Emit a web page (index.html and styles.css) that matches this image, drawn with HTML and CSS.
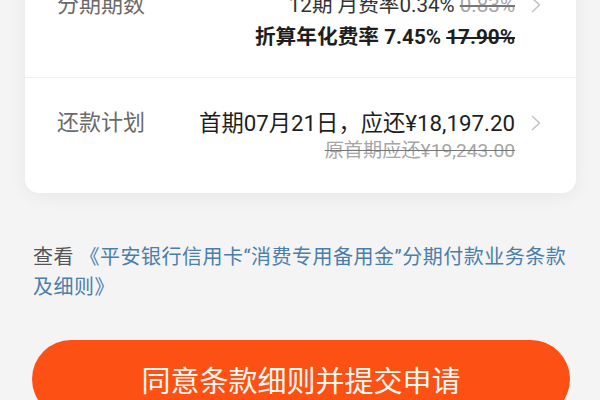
FILE: index.html
```html
<!DOCTYPE html>
<html lang="zh-CN">
<head>
<meta charset="utf-8">
<link rel="stylesheet" href="styles.css">
</head>
<body>
<div class="page">
  <div class="card">
    <div class="row row-first">
      <div class="label">分期期数</div>
      <div class="values">
        <div class="line l1">12期 月费率0.34% <span class="old">0.83%</span></div>
        <div class="line l2">折算年化费率 7.45% <span class="old-bold">17.90%</span></div>
      </div>
      <svg class="chev" viewBox="0 0 10 16" width="10" height="16"><polyline points="1.5,1.5 8.5,8 1.5,14.5" fill="none" stroke="#c4c4c4" stroke-width="1.6" stroke-linecap="round" stroke-linejoin="round"/></svg>
    </div>
    <div class="row row-second">
      <div class="label">还款计划</div>
      <div class="values">
        <div class="line l3">首期07月21日，应还¥18,197.20</div>
        <div class="line l4"><span class="old">原首期应还¥19,243.00</span></div>
      </div>
      <svg class="chev" viewBox="0 0 10 16" width="10" height="16"><polyline points="1.5,1.5 8.5,8 1.5,14.5" fill="none" stroke="#c4c4c4" stroke-width="1.6" stroke-linecap="round" stroke-linejoin="round"/></svg>
    </div>
  </div>
  <p class="terms">查看 <span class="link">《平安银行信用卡“消费专用备用金”分期付款业务条款及细则》</span></p>
  <button class="submit">同意条款细则并提交申请</button>
</div>
</body>
</html>
```
FILE: styles.css
```css
html, body {
  margin: 0;
  padding: 0;
  background: #f4f4f4;
  overflow: hidden;
}
body {
  font-family: "Roboto", "Noto Sans CJK SC", sans-serif;
  width: 600px;
  height: 400px;
}
.page {
  display: flex;
  flex-direction: column;
}
.card {
  margin: -40px 24px 0 25px;
  background: #ffffff;
  border-radius: 0 0 14px 14px;
  box-shadow: 0 4px 18px rgba(0, 0, 0, 0.05);
}
.row {
  display: flex;
  align-items: flex-start;
  padding: 0 35px 0 32px;
}
.row-first {
  padding-top: 30px;
  padding-bottom: 23px;
  border-bottom: 1px solid #f0f0f0;
}
.row-second {
  padding-top: 30px;
  padding-bottom: 29px;
}
.label {
  font-size: 22px;
  line-height: 30px;
  color: #6a6a6a;
}
.values {
  margin-left: auto;
  text-align: right;
  color: #222;
}
.line {
  white-space: nowrap;
}
.l1 {
  font-size: 20.6px;
  line-height: 30px;
  color: #333;
}
.l2 {
  font-size: 20.7px;
  line-height: 34px;
  font-weight: 700;
  color: #1e1e1e;
}
.l3 {
  font-size: 22.3px;
  line-height: 30px;
  color: #1e1e1e;
}
.l4 {
  font-size: 19.2px;
  line-height: 26px;
}
.old {
  color: #a6a6a6;
  text-decoration: line-through;
  text-decoration-color: #777;
}
.old-bold {
  text-decoration: line-through;
}
.chev {
  margin-left: 16px;
  margin-top: 7px;
  flex: none;
}
.terms {
  margin: 49px 30px 0 33px;
  font-size: 20px;
  line-height: 30px;
  letter-spacing: 0.5px;
  color: #555;
}
.link {
  color: #4a7eab;
}
.submit {
  margin: 38px 30px 0 32px;
  height: 78px;
  border: none;
  border-radius: 39px;
  background: #fd5014;
  color: #fff8f0;
  font-family: "Noto Sans CJK SC", sans-serif;
  font-size: 29px;
  line-height: 78px;
  padding: 0;
}
```
